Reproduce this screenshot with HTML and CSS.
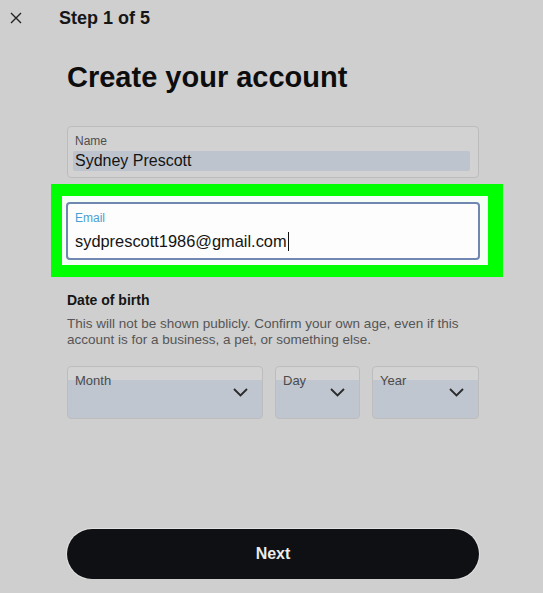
FILE: index.html
```html
<!DOCTYPE html>
<html lang="en">
<head>
    <meta charset="UTF-8">
    <meta name="viewport" content="width=device-width, initial-scale=1.0">
    <title>Create your account</title>
    <link rel="stylesheet" href="styles.css">
</head>
<body>
    <div class="top-bar">
        <button class="close-btn" aria-label="Close">
            <svg width="12" height="12" viewBox="0 0 12 12"><path d="M1 1 L11 11 M11 1 L1 11" stroke="#222" stroke-width="1.4" fill="none"/></svg>
        </button>
        <span class="step">Step 1 of 5</span>
    </div>

    <div class="page">
        <h1>Create your account</h1>

        <div class="field filled">
            <label>Name</label>
            <div class="value autofill">Sydney Prescott</div>
        </div>

        <!-- green highlight around the focused field -->
        <div class="highlight">
            <div class="field focused">
                <label>Email</label>
                <div class="value">sydprescott1986@gmail.com<span class="caret"></span></div>
            </div>
        </div>

        <h2>Date of birth</h2>
        <p class="hint">This will not be shown publicly. Confirm your own age, even if this account is for a business, a pet, or something else.</p>

        <div class="dob">
            <div class="select">
                <span class="select-label">Month</span>
                <svg class="chevron" width="15" height="9" viewBox="0 0 15 9"><path d="M1 1 L7.5 7.5 L14 1" stroke="#2a2a2a" stroke-width="1.8" fill="none"/></svg>
            </div>
            <div class="select">
                <span class="select-label">Day</span>
                <svg class="chevron" width="15" height="9" viewBox="0 0 15 9"><path d="M1 1 L7.5 7.5 L14 1" stroke="#2a2a2a" stroke-width="1.8" fill="none"/></svg>
            </div>
            <div class="select">
                <span class="select-label">Year</span>
                <svg class="chevron" width="15" height="9" viewBox="0 0 15 9"><path d="M1 1 L7.5 7.5 L14 1" stroke="#2a2a2a" stroke-width="1.8" fill="none"/></svg>
            </div>
        </div>

        <button class="next-btn">Next</button>
    </div>
</body>
</html>
```

FILE: styles.css
```css
/* Base styles */
body {
    margin: 0;
    font-family: "Liberation Sans", Arial, sans-serif;
    background: #cfcfcf;
    color: #111;
}

/* Top bar */
.top-bar {
    display: flex;
    align-items: center;
    padding: 7px 0 0 10px;
    height: 22px;
}
.close-btn {
    display: flex;
    padding: 0;
    border: none;
    background: none;
    width: 12px;
    height: 12px;
    margin-right: 37px;
}
.step {
    font-size: 18px;
    line-height: 22px;
    font-weight: bold;
    color: #161616;
}

.page {
    width: 412px;
    margin-left: 67px;
}

h1 {
    margin: 31px 0 0;
    font-size: 29px;
    line-height: 34px;
    font-weight: bold;
    color: #0d0d0d;
}

/* Text fields */
.field {
    border: 1px solid #bcbcbc;
    border-radius: 4px;
    background: #d2d2d2;
    padding: 7px 7px 6px 7px;
}
.field label {
    display: block;
    font-size: 12px;
    line-height: 14px;
    color: #4e4e4e;
}
.field .value {
    font-size: 16px;
    line-height: 20px;
    color: #141414;
}
.filled {
    margin-top: 32px;
}
.autofill {
    margin: 3px 1px 0 -2px;
    padding-left: 2px;
    background: #bec4cd;
    border-radius: 2px;
}

.highlight {
    margin: 6px -24px 0 -16px;
    border-style: solid;
    border-color: #00ff00;
    border-width: 12px 15px 12px 11px;
    padding: 6px 8px 5px 4px;
    background: #f6fff5;
}
.focused {
    border: 2px solid #6f87b1;
    background: #fdfdfd;
    padding: 7px 7px 7px 7px;
}
.focused label {
    color: #4aa0d2;
}
.focused .value {
    margin-top: 6px;
    font-size: 16.4px;
}
.caret {
    display: inline-block;
    width: 1px;
    height: 19px;
    background: #111;
    vertical-align: -4px;
    margin-left: 1px;
}

/* Date of birth */
h2 {
    margin: 14px 0 0;
    font-size: 14px;
    line-height: 18px;
    font-weight: bold;
    color: #151515;
}
.hint {
    margin: 7px 0 0;
    font-size: 13.5px;
    line-height: 16px;
    color: #555;
}

.dob {
    display: grid;
    grid-template-columns: 196px 85px 1fr;
    gap: 12px;
    margin-top: 18px;
}
.select {
    display: flex;
    box-sizing: border-box;
    height: 53px;
    border: 1px solid #bdbdbd;
    border-radius: 4px;
    background: linear-gradient(#d3d3d3 0, #d3d3d3 13px, #bfc6d0 13px);
    padding: 6px 14px 0 7px;
}
.select-label {
    font-size: 13px;
    line-height: 16px;
    color: #4b4b4b;
}
.chevron {
    margin-left: auto;
    align-self: center;
    margin-top: -6px;
}

/* Next button */
.next-btn {
    display: block;
    width: 100%;
    height: 50px;
    margin-top: 110px;
    border: none;
    border-radius: 25px;
    background: #0e1013;
    box-shadow: 0 0 0 1px #e2e2e2;
    color: #ececec;
    font-family: "Liberation Sans", Arial, sans-serif;
    font-size: 16px;
    font-weight: bold;
    cursor: pointer;
}
```
